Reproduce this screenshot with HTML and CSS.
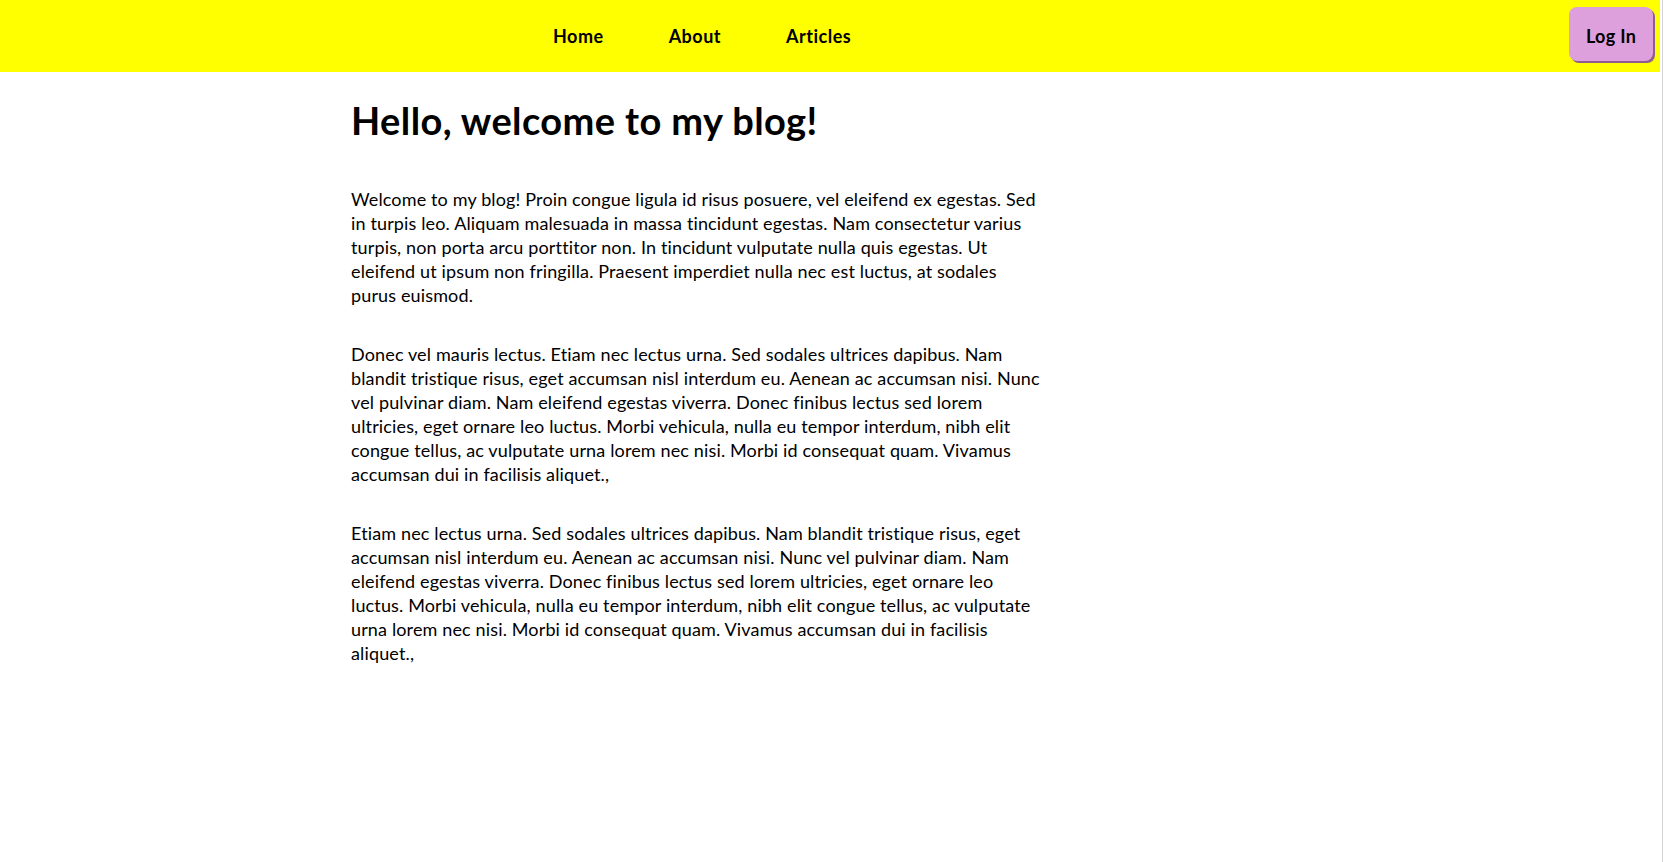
FILE: index.html
```html
<!DOCTYPE html>
<html lang="en">
<head>
<meta charset="utf-8">
<title>My Blog</title>
<link rel="stylesheet" href="styles.css">
</head>
<body>
<header class="topbar">
  <nav class="nav">
    <a class="nav-link" href="#">Home</a>
    <a class="nav-link" href="#">About</a>
    <a class="nav-link" href="#">Articles</a>
  </nav>
  <button class="login">Log In</button>
</header>
<main class="content">
  <h1 class="title">Hello, welcome to my blog!</h1>
  <p class="para">Welcome to my blog! Proin congue ligula id risus posuere, vel eleifend ex egestas. Sed in turpis leo. Aliquam malesuada in massa tincidunt egestas. Nam consectetur varius turpis, non porta arcu porttitor non. In tincidunt vulputate nulla quis egestas. Ut eleifend ut ipsum non fringilla. Praesent imperdiet nulla nec est luctus, at sodales purus euismod.</p>
  <p class="para">Donec vel mauris lectus. Etiam nec lectus urna. Sed sodales ultrices dapibus. Nam blandit tristique risus, eget accumsan nisl interdum eu. Aenean ac accumsan nisi. Nunc vel pulvinar diam. Nam eleifend egestas viverra. Donec finibus lectus sed lorem ultricies, eget ornare leo luctus. Morbi vehicula, nulla eu tempor interdum, nibh elit congue tellus, ac vulputate urna lorem nec nisi. Morbi id consequat quam. Vivamus accumsan dui in facilisis aliquet.,</p>
  <p class="para">Etiam nec lectus urna. Sed sodales ultrices dapibus. Nam blandit tristique risus, eget accumsan nisl interdum eu. Aenean ac accumsan nisi. Nunc vel pulvinar diam. Nam eleifend egestas viverra. Donec finibus lectus sed lorem ultricies, eget ornare leo luctus. Morbi vehicula, nulla eu tempor interdum, nibh elit congue tellus, ac vulputate urna lorem nec nisi. Morbi id consequat quam. Vivamus accumsan dui in facilisis aliquet.,</p>
</main>
</body>
</html>
```

FILE: styles.css
```css
html {
  background: #ffffff;
}
body {
  margin: 0;
  min-height: 862px;
  font-family: Lato, "Open Sans", sans-serif;
  font-variant-ligatures: none;
  color: #000;
  border-right: 1px solid #d4d4d4;
  padding-right: 2px;
  box-sizing: border-box;
}
.topbar {
  display: flex;
  align-items: flex-start;
  justify-content: space-between;
  height: 72px;
  background: #ffff00;
  box-sizing: border-box;
  padding: 7px 7px 0 553px;
}
.nav {
  display: flex;
  gap: 65px;
  padding-top: 17px;
}
.nav-link {
  font-weight: 700;
  font-size: 18px;
  line-height: 24px;
  letter-spacing: 0.5px;
  color: #000;
  text-decoration: none;
}
.login {
  width: 84px;
  height: 54px;
  font-family: inherit;
  font-weight: 700;
  font-size: 18px;
  letter-spacing: 0.3px;
  color: #000;
  background: #dda0dd;
  border: none;
  border-radius: 8px;
  box-shadow: 2px 2px 0 #8e5e8e;
  padding: 4px 0 0;
  cursor: pointer;
}
.content {
  padding: 0 0 0 351px;
  width: 690px;
}
.title {
  font-size: 38px;
  line-height: 48px;
  letter-spacing: 0.4px;
  font-weight: 700;
  margin: 24px 0 43px;
}
.para {
  font-size: 18px;
  line-height: 24px;
  letter-spacing: 0.14px;
  margin: 0 0 35px;
}
```
